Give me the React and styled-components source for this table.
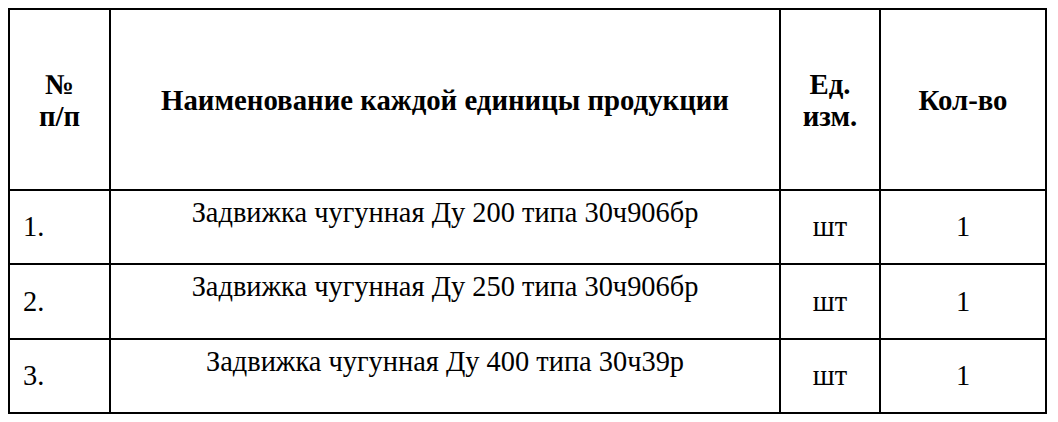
import styled, { createGlobalStyle } from "styled-components";

const GlobalStyle = createGlobalStyle`
  body {
    margin: 8px;
    background: #fff;
    color: #000;
    font-family: "Liberation Serif", "Times New Roman", serif;
  }
`;

const Table = styled.table`
  border-collapse: collapse;
  table-layout: fixed;
  width: 1039px;
  font-family: "Liberation Serif", "Times New Roman", serif;
  font-size: 28.4px;
`;

const Row = styled.tr`
  height: ${({ $h }) => $h}px;
`;

const Head = styled.th`
  border: 2px solid #000;
  font-weight: bold;
  font-size: 28.8px;
  text-align: center;
  vertical-align: middle;
  padding: 0 4px;
  line-height: 32px;
`;

const Cell = styled.td`
  border: 2px solid #000;
  padding: ${({ $top }) => ($top ? "6px 4px 0" : "0 4px")};
  text-align: ${({ $left }) => ($left ? "left" : "center")};
  padding-left: ${({ $left }) => ($left ? "13px" : "4px")};
  vertical-align: ${({ $top }) => ($top ? "top" : "middle")};
  line-height: normal;
`;

const items = [
  { n: "1.", name: "Задвижка чугунная Ду 200 типа 30ч906бр", h: 74 },
  { n: "2.", name: "Задвижка чугунная Ду 250 типа 30ч906бр", h: 75 },
  { n: "3.", name: "Задвижка чугунная Ду 400 типа 30ч39р", h: 74 },
];

const App = () => {
  return (
    <>
      <GlobalStyle />
      <Table>
        <colgroup>
          <col style={{ width: 101 }} />
          <col style={{ width: 670 }} />
          <col style={{ width: 100 }} />
          <col style={{ width: 166 }} />
        </colgroup>
        <thead>
          <Row $h={181}>
            <Head>№<br />п/п</Head>
            <Head>Наименование каждой единицы продукции</Head>
            <Head>Ед.<br />изм.</Head>
            <Head>Кол-во</Head>
          </Row>
        </thead>
        <tbody>
          {items.map((it) => (
            <Row $h={it.h} key={it.n}>
              <Cell $left>{it.n}</Cell>
              <Cell $top>{it.name}</Cell>
              <Cell>шт</Cell>
              <Cell>1</Cell>
            </Row>
          ))}
        </tbody>
      </Table>
    </>
  );
};

export default App;
